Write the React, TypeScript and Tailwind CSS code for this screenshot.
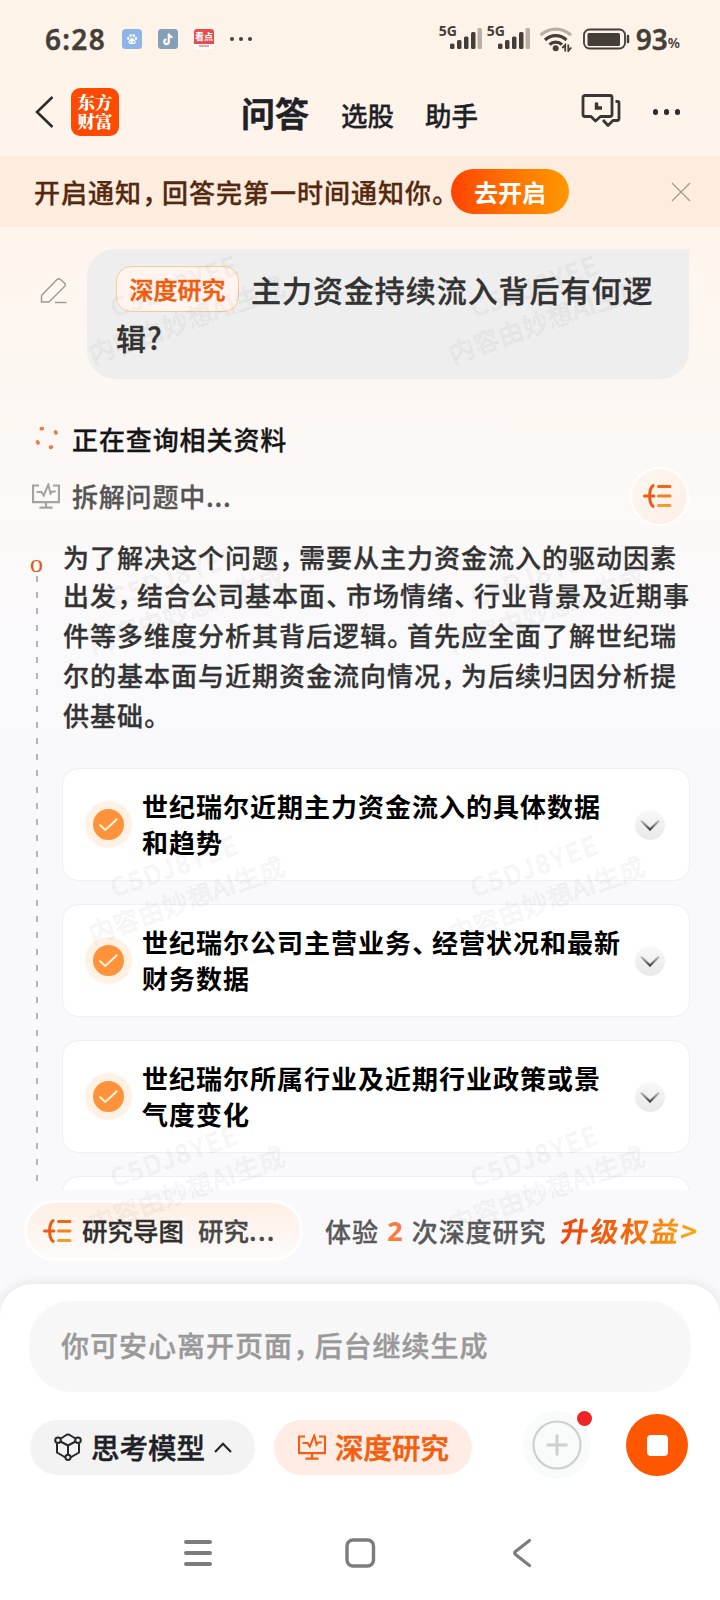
import type { ReactNode } from "react";

const steps = [
  ["世纪瑞尔近期主力资金流入的具体数据", "和趋势"],
  ["世纪瑞尔公司主营业务、经营状况和最新", "财务数据"],
  ["世纪瑞尔所属行业及近期行业政策或景", "气度变化"],
];

const analysis = [
  "为了解决这个问题，需要从主力资金流入的驱动因素",
  "出发，结合公司基本面、市场情绪、行业背景及近期事",
  "件等多维度分析其背后逻辑。首先应全面了解世纪瑞",
  "尔的基本面与近期资金流向情况，为后续归因分析提",
  "供基础。",
];

// Full-width punctuation is set tighter than the characters around it
function Text({ children }: { children: string }) {
  return (
    <>
      {children.split(/([，。、])/).map((part, i) =>
        /^[，。、]$/.test(part) ? (
          <span key={i} className="ml-[0.01em] -mr-[0.28em]">
            {part}
          </span>
        ) : (
          part
        )
      )}
    </>
  );
}

function SignalBars() {
  return (
    <div className="relative w-[46px] h-7">
      <span className="absolute left-0 -top-0.5 text-[14px] leading-4 font-bold">5G</span>
      <svg width="46" height="28" className="absolute left-0 top-0">
        <rect x="11" y="18.5" width="4.5" height="5.5" rx="1.5" fill="#443e39" />
        <rect x="18" y="15" width="4.5" height="9" rx="1.5" fill="#443e39" />
        <rect x="25" y="11.5" width="4.5" height="12.5" rx="1.5" fill="#443e39" />
        <rect x="32" y="7" width="4.5" height="17" rx="1.5" fill="#443e39" />
        <rect x="38.5" y="3" width="4.5" height="21" rx="1.5" fill="#b8afa6" />
      </svg>
    </div>
  );
}

function StatusBar() {
  return (
    <div className="h-[78px] flex items-center pl-[45px] pr-10 text-[#443e39] font-['Noto_Sans',sans-serif]">
      <span className="text-[28px] leading-8 font-semibold tracking-[1.3px] w-[61px] whitespace-nowrap [-webkit-text-stroke:0.4px]">
        6:28
      </span>
      <div className="ml-4 flex gap-4">
        <svg width="20" height="20" viewBox="0 0 20 20">
          <rect width="20" height="20" rx="3.5" fill="#8eb5ea" />
          <g fill="#fff">
            <ellipse cx="6.3" cy="9.3" rx="1.2" ry="1.6" />
            <ellipse cx="8.7" cy="6.5" rx="1.2" ry="1.6" />
            <ellipse cx="11.8" cy="6.6" rx="1.2" ry="1.6" />
            <ellipse cx="14" cy="9.4" rx="1.2" ry="1.6" />
            <path d="M10.1 9c1.3 0 1.7 1.3 2.7 2.2 1.4 1.2 1.2 3.8-.8 3.8H8.3c-2 0-2.3-2.5-.9-3.7C8.5 10.3 8.8 9 10.1 9z" />
          </g>
          <path d="M8.3 12v1.7M11 12v1.5h1.3V12" stroke="#8eb5ea" strokeWidth=".8" fill="none" />
        </svg>
        <svg width="20" height="20" viewBox="0 0 20 20">
          <rect width="20" height="20" rx="3.5" fill="#859fb6" />
          <path d="M10.8 4.5v8.3a2.3 2.3 0 1 1-2.3-2.3M10.8 4.8c.3 1.9 1.6 3.2 3.7 3.3" stroke="#fff" strokeWidth="2.2" fill="none" />
        </svg>
        <div className="w-5 h-5 rounded-[3px] overflow-hidden bg-white font-['Noto_Sans_CJK_SC',sans-serif] font-bold text-center">
          <div className="h-[15px] bg-[#e84b50] text-white text-[9px] leading-[15px]">看点</div>
          <div className="mx-auto mt-px w-2.5 h-0.5 bg-[#eba9a6]" />
        </div>
      </div>
      <div className="ml-4 flex gap-[5px]">
        <i className="size-1 rounded-full bg-[#443e39]" />
        <i className="size-1 rounded-full bg-[#443e39]" />
        <i className="size-1 rounded-full bg-[#443e39]" />
      </div>
      <div className="ml-auto flex items-center">
        <div className="flex gap-0.5">
          <SignalBars />
          <SignalBars />
        </div>
        <svg width="34" height="26" viewBox="0 0 34 26" fill="none" strokeWidth="3.2" className="ml-1.5 mr-2.5">
          <path d="M1.5 9.2a22 22 0 0 1 30.5 0" stroke="#b8afa6" />
          <path d="M6 14a15.5 15.5 0 0 1 21.5 0" stroke="#443e39" />
          <path d="M10.5 18.6a9 9 0 0 1 12.5 0" stroke="#443e39" />
          <circle cx="16.7" cy="22.3" r="3" fill="#443e39" />
          <path d="M26.2 25.5v-6.5l-3 3M29.3 18.5V25l3-3.5" stroke="#443e39" strokeWidth="1.8" />
        </svg>
        <svg width="47" height="22" viewBox="0 0 47 22" fill="none">
          <rect x="1" y="1.5" width="41" height="19" rx="5.5" stroke="#443e39" strokeWidth="1.8" />
          <rect x="4.5" y="5" width="32.5" height="13" rx="1.5" fill="#443e39" />
          <path d="M45 8v6" stroke="#443e39" strokeWidth="2.5" strokeLinecap="round" />
        </svg>
        <span className="ml-1.5 text-[28px] leading-8 font-semibold [-webkit-text-stroke:0.4px]">93</span>
        <span className="mt-2 text-[14px] leading-5 font-semibold">%</span>
      </div>
    </div>
  );
}

function Header() {
  return (
    <div className="h-[78px] flex items-start pl-[34px] pr-10 text-[#1e2126]">
      <svg width="20" height="34" viewBox="0 0 20 34" fill="none" className="mt-[17px]">
        <path d="M18.5 2 3 17l15.5 15" stroke="#2d2d2d" strokeWidth="2.6" />
      </svg>
      <div className="mt-2.5 ml-[17px] size-12 rounded-[9px] bg-[#ff4a02] text-white text-[17.5px] leading-[19.5px] font-black text-center pt-[3.5px] font-['Noto_Serif_CJK_SC','Noto_Sans_CJK_SC',serif]">
        东方
        <br />
        财富
      </div>
      <div className="ml-[122px] flex items-center">
        <span className="text-[34px] leading-[66px] font-bold [-webkit-text-stroke:0.4px]">问答</span>
        <span className="ml-[32px] mt-1 text-[26.5px] leading-[66px] font-medium [-webkit-text-stroke:0.3px]">选股</span>
        <span className="ml-[31px] mt-1 text-[26.5px] leading-[66px] font-medium [-webkit-text-stroke:0.3px]">助手</span>
      </div>
      <svg width="40" height="36" viewBox="0 0 40 36" fill="none" stroke="#3a3633" strokeWidth="2.8" strokeLinejoin="round" className="ml-auto mt-[15px]">
        <path d="M4 2.5h25a2 2 0 0 1 2 2v17a2 2 0 0 1-2 2h-9.5L14.5 28 10 23.5H4a2 2 0 0 1-2-2v-17a2 2 0 0 1 2-2z" />
        <path d="M34.5 8.5h2a1.5 1.5 0 0 1 1.5 1.5v15.5a2 2 0 0 1-2 2h-4L27 32.5 22 27" />
        <path d="M15.5 9.5v5.5H21" strokeWidth="3.4" strokeLinejoin="miter" />
      </svg>
      <div className="ml-8 mt-[31px] flex gap-[5.5px]">
        <i className="size-[5.5px] rounded-full bg-[#2d2d2d]" />
        <i className="size-[5.5px] rounded-full bg-[#2d2d2d]" />
        <i className="size-[5.5px] rounded-full bg-[#2d2d2d]" />
      </div>
    </div>
  );
}

function NoticeBanner() {
  return (
    <div className="h-[71px] bg-[#fdeddf] flex items-center pl-[34px] pr-[29px]">
      <span className="w-[417px] whitespace-nowrap text-[26px] tracking-[1px] leading-10 font-medium text-[#54290f] [-webkit-text-stroke:0.3px]">
        <Text>开启通知，回答完第一时间通知你。</Text>
      </span>
      <button className="w-[118px] h-[45px] rounded-full bg-gradient-to-r from-[#ff4102] to-[#ff9800] text-white text-[24px] leading-10 font-bold">
        去开启
      </button>
      <svg width="20" height="20" viewBox="0 0 20 20" stroke="#a29a94" strokeWidth="1.3" className="ml-auto">
        <path d="M1 1l18 18M19 1 1 19" />
      </svg>
    </div>
  );
}

// Mind-map glyph: a bracket that branches into three lines
function MapIcon() {
  return (
    <svg width="29" height="24" viewBox="0 0 29 24" fill="none" strokeWidth="3" strokeLinecap="round">
      <defs>
        <linearGradient id="mapLines" gradientUnits="userSpaceOnUse" x1="0" y1="0" x2="0" y2="24">
          <stop offset="0" stopColor="#ee6011" />
          <stop offset="1" stopColor="#eda62c" />
        </linearGradient>
      </defs>
      <path d="M10 1.7C5.5 5 5.5 19 10 22.3M1.5 12H11" stroke="#ec5a14" />
      <path d="M15.5 2.5H27M15.5 12H27M15.5 21.5H27" stroke="url(#mapLines)" />
    </svg>
  );
}

function MonitorIcon({ className }: { className?: string }) {
  return (
    <svg width="28" height="26" viewBox="0 0 28 26" fill="none" stroke="currentColor" strokeWidth="2.2" className={className}>
      <path d="M7 2.5H1v16.7h26V2.5h-6" />
      <path d="M4.5 9h5l2.3 3.5L16.3 1.5l2.2 9 1.7-2h3.5" strokeWidth="2" />
      <path d="M14 19v5.5M7.5 24.7h13" />
    </svg>
  );
}

function CheckBadge() {
  return (
    <div className="size-[47px] rounded-full bg-[#fff1e4] flex items-center justify-center">
      <div className="size-[31px] rounded-full bg-[#ff923a] flex items-center justify-center">
        <svg width="19" height="14" viewBox="0 0 19 14" fill="none" stroke="#fff3e2" strokeWidth="2" strokeLinecap="round">
          <path d="M1.2 7.3 6.3 12 17.5 1.5" />
        </svg>
      </div>
    </div>
  );
}

function StepCard({ lines }: { lines: string[] }) {
  return (
    <div className="h-[113px] shrink-0 rounded-2xl border border-[#efeff1] bg-white flex items-center pl-[22px] pr-6">
      <CheckBadge />
      <div className="ml-2.5 -mt-px text-[26px] tracking-[1px] leading-9 font-bold text-black whitespace-nowrap">
        {lines.map((line) => (
          <div key={line}>
            <Text>{line}</Text>
          </div>
        ))}
      </div>
      <div className="ml-auto size-[30px] shrink-0 rounded-full bg-gradient-to-b from-[#f8f8f8] to-[#e9e9e9] flex items-center justify-center">
        <svg width="20" height="12" viewBox="0 0 20 12" fill="none" strokeWidth="2.2">
          <defs>
            <linearGradient id="fade" gradientUnits="userSpaceOnUse" x1="0" y1="0" x2="0" y2="12">
              <stop offset="0" stopColor="#dcdcde" />
              <stop offset="1" stopColor="#2c2c30" />
            </linearGradient>
          </defs>
          <path d="M1 1.5 10 10.5 19 1.5" stroke="url(#fade)" />
        </svg>
      </div>
    </div>
  );
}

function Question() {
  return (
    <div className="flex pt-[22px] pl-[40px] pr-[30px]">
      <svg width="27" height="27" viewBox="0 0 27 27" fill="none" stroke="#9c9893" strokeWidth="1.4" strokeLinejoin="round" className="mt-[28px]">
        <path d="M1.5 25v-6.5L17 2.5a2.5 2.5 0 0 1 3.5 0L24.5 6a2.5 2.5 0 0 1 0 3.5L9 25z" />
        <path d="M15 25.5h11.5" />
      </svg>
      <div className="ml-5 w-[602px] h-[130px] rounded-[28px] rounded-tr-none bg-[#eeeeee] pl-[29px] pt-[17px] font-medium text-[#333]">
        <div className="flex items-center h-[46px]">
          <span className="w-[123px] h-[46px] rounded-[15px] border border-[#f4cf94] bg-[#fff4f0] text-[24px] leading-[43px] text-center text-[#f35c0c] [-webkit-text-stroke:0.5px]">
            深度研究
          </span>
          <span className="ml-3 text-[30px] tracking-[0.95px] leading-[46px] whitespace-nowrap [-webkit-text-stroke:0.3px]">
            主力资金持续流入背后有何逻
          </span>
        </div>
        <div className="mt-[2px] text-[30px] tracking-[1px] leading-[46px] [-webkit-text-stroke:0.3px]">辑?</div>
      </div>
    </div>
  );
}

function Progress() {
  return (
    <div className="pl-8 pr-[31px]">
      <div className="mt-[41px] h-10 flex items-center">
        <svg width="26" height="26" viewBox="0 0 26 26" stroke="#ef7a45" strokeWidth="3.6" strokeLinecap="round" className="ml-0.5 mb-1">
          <path d="M8.3 3.5l-1 .3M21.5 7l.6.9M3.5 17l.6.9M17.5 22l-1 .3" />
        </svg>
        <span className="ml-3 -mt-[3px] text-[26px] tracking-[0.9px] leading-10 font-medium text-[#161616] [-webkit-text-stroke:0.3px]">
          正在查询相关资料
        </span>
      </div>
      <div className="mt-[7px] h-[58px] flex items-center">
        <MonitorIcon className="text-[#a3a3a3]" />
        <span className="ml-3 text-[26px] tracking-[0.8px] leading-10 font-medium text-[#555] [-webkit-text-stroke:0.3px]">拆解问题中...</span>
        <div className="ml-auto size-[59px] rounded-full border-2 border-white bg-gradient-to-br from-[#fdf7ee] to-[#feeee8] flex items-center justify-center pr-[5px]">
          <MapIcon />
        </div>
      </div>
    </div>
  );
}

function Timeline({ children }: { children: ReactNode }) {
  return (
    <div className="mt-[13px] flex">
      <div className="w-[62px] shrink-0 flex flex-col pl-[30px]">
        <span className="h-[38px] pt-[12px] text-[26px] leading-[28px] text-[#dd5a17] font-['Liberation_Serif',serif]">o</span>
        <div className="ml-[6px] w-0.5 h-[606px] bg-[repeating-linear-gradient(to_bottom,#b5b5b5_0_6px,transparent_6px_16.2px)]" />
      </div>
      <div className="w-[628px] shrink-0">{children}</div>
    </div>
  );
}

function Watermark() {
  return (
    <div className="absolute left-0 top-[157px] w-[720px] grid grid-cols-2 pointer-events-none text-black/[0.05] font-medium text-[26px] leading-9 [-webkit-text-stroke:0.7px]">
      {[0, 1, 2, 3, 4, 5, 6, 7].map((n) => (
        <div key={n} className="h-[290px] flex items-center justify-center">
          <div className="-rotate-[19.7deg] text-center whitespace-nowrap">
            <div className="tracking-[1.4px]">C5DJ8YEE</div>
            <div>内容由妙想AI生成</div>
          </div>
        </div>
      ))}
    </div>
  );
}

function ResearchBar() {
  return (
    <div className="h-[94px] shrink-0 flex items-start pt-[10px] pl-6">
      <div className="w-[279px] h-[61px] rounded-full border-[3px] border-white bg-gradient-to-b from-[#feefe5] to-[#fdfbfb] flex items-center pl-[16px] text-[25.5px] font-medium whitespace-nowrap">
        <MapIcon />
        <span className="ml-2.5 -mt-px leading-10 text-[#2f2f2f] [-webkit-text-stroke:0.3px]">研究导图</span>
        <span className="ml-3.5 -mt-px leading-10 text-[#484848] [-webkit-text-stroke:0.3px]">
          研究<span className="tracking-[1.3px]">...</span>
        </span>
      </div>
      <div className="ml-[22px] h-[61px] flex items-center text-[26px] tracking-[0.9px] leading-10 font-medium text-[#5a5a5a] whitespace-nowrap">
        <span className="[-webkit-text-stroke:0.3px]">体验</span>
        <span className="w-[33px] text-center text-[27px] font-bold text-[#f97b3d] font-['Noto_Sans',sans-serif]">2</span>
        <span className="[-webkit-text-stroke:0.3px]">次深度研究</span>
        <span className="ml-[15px] -mt-0.5 text-[28px] tracking-[2px] font-bold inline-block -skew-x-[8deg] bg-gradient-to-r from-[#ee4510] via-[#f4690c] to-[#f9ab12] bg-clip-text text-transparent">
          升级权益&gt;
        </span>
      </div>
    </div>
  );
}

function Composer() {
  return (
    <div className="h-[202px] shrink-0 rounded-t-[32px] bg-white pt-[17px] shadow-[0_-2px_12px_rgba(0,0,0,0.08)]">
      <div className="ml-[29px] w-[662px] h-[91px] rounded-[42px] bg-[#f7f7f7] pl-8 text-[28px] tracking-[1px] leading-[88px] font-medium text-[#999] whitespace-nowrap [-webkit-text-stroke:0.4px]">
        <Text>你可安心离开页面，后台继续生成</Text>
      </div>
      <div className="mt-[20px] pl-[30px] pr-8 flex items-center h-[70px]">
        <div className="w-[225px] h-[55px] rounded-full bg-[#f3f3f3] flex items-center pl-6 text-[28.5px] text-[#1e2126] font-medium">
          <svg width="28" height="28" viewBox="0 0 28 28" fill="none" stroke="#26282c" strokeWidth="2">
            <path d="M7 5.5 11.5 2.5a4 4 0 0 1 5 0L21.5 5.5M3 10.5v9l8.5 5M25 10.5v9l-8.5 5M6.5 8.5l7.5 4 7.5-4M14 12.5V22" />
            <circle cx="4" cy="7.3" r="2.8" />
            <circle cx="24" cy="7.3" r="2.8" />
            <circle cx="14" cy="24.3" r="2.6" />
          </svg>
          <span className="ml-[9px] leading-10 [-webkit-text-stroke:0.4px]">思考模型</span>
          <svg width="18" height="11" viewBox="0 0 18 11" fill="none" stroke="#26282c" strokeWidth="2.2" className="ml-[9px]">
            <path d="M1 10 9 1.8 17 10" />
          </svg>
        </div>
        <div className="ml-[19px] w-[198px] h-[55px] rounded-full bg-[#ffede5] flex items-center pl-6 text-[28.5px] text-[#f25f11] font-medium">
          <MonitorIcon />
          <span className="ml-[9px] leading-10 [-webkit-text-stroke:0.6px]">深度研究</span>
        </div>
        <div className="ml-auto relative size-[68px] -mt-1 rounded-full bg-[#f9fafa] flex items-center justify-center">
          <svg width="50" height="50" viewBox="0 0 50 50" fill="none" stroke="#cfd0d0" strokeWidth="2.2">
            <circle cx="25" cy="25" r="23.5" />
            <path d="M25 14.5v21M14.5 25h21" strokeWidth="3" />
          </svg>
          <i className="absolute -right-px top-0 size-[15px] rounded-full bg-[#ee2426]" />
        </div>
        <div className="ml-[35px] -mt-1 size-[62px] rounded-full bg-[#ff5600] flex items-center justify-center">
          <div className="size-[21px] rounded-[4px] bg-white" />
        </div>
      </div>
    </div>
  );
}

function NavBar() {
  return (
    <div className="h-[114px] shrink-0 bg-white pt-[51px] pl-[184px] flex items-start">
      <svg width="28" height="32" viewBox="0 0 28 32" stroke="#7c7c7c" strokeWidth="4" strokeLinecap="round">
        <path d="M2 5h24M2 16h24M2 27h24" />
      </svg>
      <svg width="31" height="32" viewBox="0 0 31 32" fill="none" stroke="#7c7c7c" strokeWidth="3.4" className="ml-[133px]">
        <rect x="2" y="3" width="26.5" height="26" rx="6" />
      </svg>
      <svg width="20" height="32" viewBox="0 0 20 32" fill="none" stroke="#7c7c7c" strokeWidth="3.2" strokeLinecap="round" strokeLinejoin="round" className="ml-[136px]">
        <path d="M17.5 3.5 3.5 14.5q-1.5 1.5 0 3L17.5 28.5" />
      </svg>
    </div>
  );
}

export default function App() {
  return (
    <div className="relative w-[720px] h-[1600px] overflow-hidden flex flex-col font-['Noto_Sans_CJK_SC',sans-serif] bg-[linear-gradient(to_bottom,#fef3e8_0,#fef5ed_240px,#fcf8f5_450px,#faf9fb_640px,#f9f9fc_760px)]">
      <StatusBar />
      <Header />
      <NoticeBanner />
      <div className="h-[963px] shrink-0 overflow-hidden">
        <Question />
        <Progress />
        <Timeline>
          <div className="pl-px text-[26px] tracking-[1px] font-medium text-[#333] whitespace-nowrap [-webkit-text-stroke:0.3px]">
            {analysis.map((line) => (
              <div key={line} className="h-10 leading-[38px] first:h-[38px]">
                <Text>{line}</Text>
              </div>
            ))}
          </div>
          <div className="mt-[32px] flex flex-col gap-[23px]">
            {steps.map((lines) => (
              <StepCard key={lines[0]} lines={lines} />
            ))}
            <div className="h-[113px] shrink-0 rounded-2xl border border-[#efeff1] bg-white" />
          </div>
        </Timeline>
      </div>
      <ResearchBar />
      <Composer />
      <NavBar />
      <Watermark />
    </div>
  );
}
